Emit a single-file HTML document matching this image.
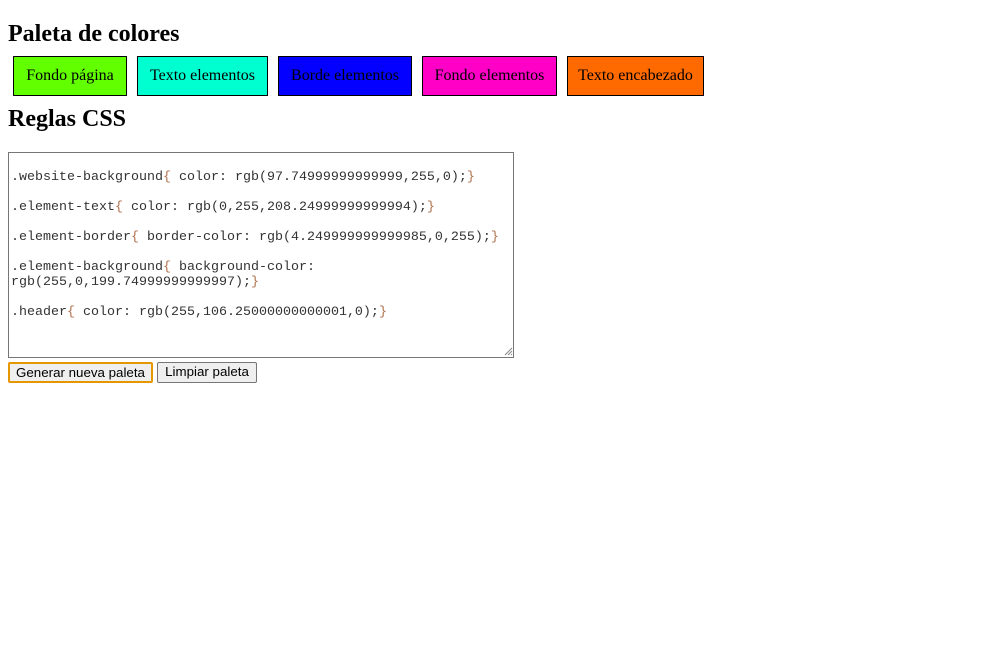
<!DOCTYPE html>
<html><head><meta charset="utf-8"><style>
body{margin:0;background:#fff;font-family:"Liberation Serif",serif;position:relative;width:1000px;height:660px;overflow:hidden}
h2{position:absolute;left:8px;margin:0;font-size:24px;line-height:28px;font-weight:bold}
.b{position:absolute;top:56px;border:1px solid #000;box-sizing:border-box;height:40px;font-size:16px;line-height:38px;text-align:center;color:#000}
.ta{position:absolute;left:8px;top:152px;width:506px;height:206px;box-sizing:border-box;border:1px solid #767676;padding:2px;font-family:"Liberation Mono",monospace;font-size:13.33px;line-height:15px;white-space:pre-wrap;color:#333}
.ta span{color:#b0704a}
.btn{position:absolute;top:362px;height:21px;box-sizing:border-box;font-family:"Liberation Sans",sans-serif;font-size:13.33px;line-height:18px;text-align:center;background:#efefef;border:1px solid #767676;border-radius:2px;color:#000}
</style></head><body>
<h2 style="top:20px">Paleta de colores</h2>
<div class="b" style="left:13px;width:114px;background:#62ff00">Fondo página</div>
<div class="b" style="left:137px;width:131px;background:#00ffd0">Texto elementos</div>
<div class="b" style="left:278px;width:134px;background:#0400ff">Borde elementos</div>
<div class="b" style="left:422px;width:135px;background:#ff00c7">Fondo elementos</div>
<div class="b" style="left:567px;width:137px;background:#ff6a00">Texto encabezado</div>
<h2 style="top:105px">Reglas CSS</h2>
<div class="ta">
.website-background<span>{</span> color: rgb(97.74999999999999,255,0);<span>}</span>

.element-text<span>{</span> color: rgb(0,255,208.24999999999994);<span>}</span>

.element-border<span>{</span> border-color: rgb(4.249999999999985,0,255);<span>}</span>

.element-background<span>{</span> background-color: rgb(255,0,199.74999999999997);<span>}</span>

.header<span>{</span> color: rgb(255,106.25000000000001,0);<span>}</span></div>
<svg style="position:absolute;left:504px;top:347px" width="9" height="9"><path d="M1 8L8 1M4 8L8 4M7 8L8 7" stroke="#888" stroke-width="1"/></svg>
<div class="btn" style="left:8px;width:145px;border:2px solid #e59700;line-height:17px">Generar nueva paleta</div>
<div class="btn" style="left:157px;width:100px">Limpiar paleta</div>
</body></html>
